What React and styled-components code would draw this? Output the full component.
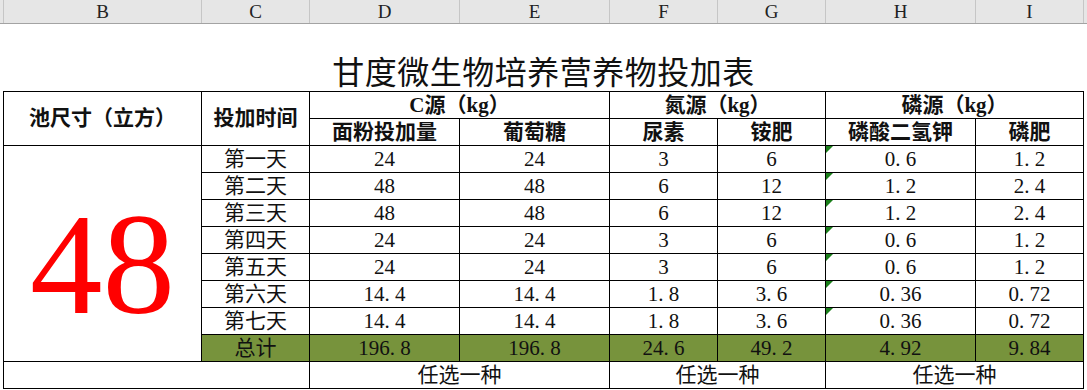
import React from "react";
import styled, { createGlobalStyle } from "styled-components";

const GlobalStyle = createGlobalStyle`
    body {
        margin : 0;
        background : #ffffff;
        font-family : "Liberation Serif", "Noto Sans CJK SC", serif;
        color : #111111;
    }
`;

const COLS = [
    { key: "B", w: 198 },
    { key: "C", w: 108 },
    { key: "D", w: 150 },
    { key: "E", w: 150 },
    { key: "F", w: 108 },
    { key: "G", w: 108 },
    { key: "H", w: 150 },
    { key: "I", w: 108 },
];

const ColumnBar = styled.div`
    display : flex;
    height : 23px;
    background : #e6e6e6;
    border-bottom : solid 1px #a3a3a3;
    padding-left : 3px;
`;

const ColLetter = styled.div`
    width : ${(p) => p.$w}px;
    box-sizing : border-box;
    border-left : solid 1px #c6c6c6;
    display : flex;
    align-items : center;
    justify-content : center;
    font-size : 19px;
    color : #222222;
`;

const BarRest = styled.div`
    flex : 1;
    border-left : solid 1px #c6c6c6;
`;

const Sheet = styled.div`
    padding-left : 3px;
    width : 1081px;
`;

const TitleRow = styled.div`
    height : 67px;
    display : flex;
    align-items : flex-end;
    justify-content : center;
`;

const Title = styled.div`
    font-size : 32px;
    line-height : 1;
    padding-bottom : 2px;
    letter-spacing : 0.5px;
`;

const Grid = styled.div`
    display : grid;
    grid-template-columns : ${COLS.map((c) => c.w + "px").join(" ")};
    grid-auto-rows : 27px;
    border-left : solid 1px #000;
    border-top : solid 1px #000;
`;

const Cell = styled.div`
    position : relative;
    box-sizing : border-box;
    grid-column : span ${(p) => p.$span || 1};
    grid-row : span ${(p) => p.$rows || 1};
    border-right : solid 1px #000;
    border-bottom : solid 1px #000;
    display : flex;
    align-items : center;
    justify-content : center;
    font-size : 21px;
    line-height : 1;
    font-weight : ${(p) => (p.$bold ? 700 : 400)};
    background : ${(p) => (p.$green ? "#77933c" : "#ffffff")};
    white-space : nowrap;
`;

const BigNumber = styled(Cell)`
    font-size : 145px;
    color : #ff0000;
    padding-top : 22px;
`;

const Dot = styled.span`
    display : inline-block;
    width : 0.5em;
`;

const Flag = styled.span`
    position : absolute;
    top : 0;
    left : 0;
    width : 0;
    height : 0;
    border-top : solid 7px #1a7f1a;
    border-right : solid 7px transparent;
`;

const Num = ({ v }) => {
    const [a, b] = String(v).split(".");
    if (b === undefined) return a;
    return (
        <>
            {a}
            <Dot>.</Dot>
            {b}
        </>
    );
};

const days = [
    ["第一天", 24, 24, 3, 6, 0.6, 1.2],
    ["第二天", 48, 48, 6, 12, 1.2, 2.4],
    ["第三天", 48, 48, 6, 12, 1.2, 2.4],
    ["第四天", 24, 24, 3, 6, 0.6, 1.2],
    ["第五天", 24, 24, 3, 6, 0.6, 1.2],
    ["第六天", 14.4, 14.4, 1.8, 3.6, 0.36, 0.72],
    ["第七天", 14.4, 14.4, 1.8, 3.6, 0.36, 0.72],
];

const total = ["总计", 196.8, 196.8, 24.6, 49.2, 4.92, 9.84];

const subHeads = ["面粉投加量", "葡萄糖", "尿素", "铵肥", "磷酸二氢钾", "磷肥"];

const App = () => {
    return (
        <>
            <GlobalStyle />
            <ColumnBar>
                {COLS.map((c) => (
                    <ColLetter key={c.key} $w={c.w}>{c.key}</ColLetter>
                ))}
                <BarRest />
            </ColumnBar>
            <Sheet>
                <TitleRow>
                    <Title>甘度微生物培养营养物投加表</Title>
                </TitleRow>
                <Grid>
                    <Cell $rows={2} $bold>池尺寸（立方）</Cell>
                    <Cell $rows={2} $bold>投加时间</Cell>
                    <Cell $span={2} $bold>C源（kg）</Cell>
                    <Cell $span={2} $bold>氮源（kg）</Cell>
                    <Cell $span={2} $bold>磷源（kg）</Cell>
                    {subHeads.map((h) => (
                        <Cell key={h} $bold>{h}</Cell>
                    ))}
                    <BigNumber $rows={8}>48</BigNumber>
                    {days.map((row) =>
                        row.map((v, i) => (
                            <Cell key={row[0] + i}>
                                {i === 5 && <Flag />}
                                <Num v={v} />
                            </Cell>
                        ))
                    )}
                    {total.map((v, i) => (
                        <Cell key={"t" + i} $green>
                            <Num v={v} />
                        </Cell>
                    ))}
                    <Cell $span={2} />
                    <Cell $span={2}>任选一种</Cell>
                    <Cell $span={2}>任选一种</Cell>
                    <Cell $span={2}>任选一种</Cell>
                </Grid>
            </Sheet>
        </>
    );
};

export default App;
